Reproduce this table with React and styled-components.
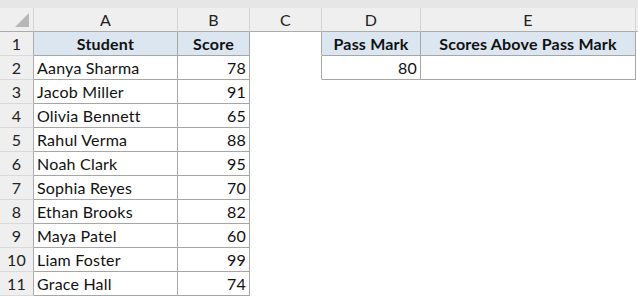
import React from 'react'
import styled, { createGlobalStyle } from 'styled-components'

const GlobalStyle = createGlobalStyle`
  html, body {
    margin: 0;
    padding: 0;
    background: #ffffff;
  }
  body {
    font-family: Lato, "Liberation Sans", sans-serif;
  }
`

const columns = [
  { key: 'A', width: 144 },
  { key: 'B', width: 72 },
  { key: 'C', width: 72 },
  { key: 'D', width: 99 },
  { key: 'E', width: 215 },
]

const students = [
  ['Aanya Sharma', 78],
  ['Jacob Miller', 91],
  ['Olivia Bennett', 65],
  ['Rahul Verma', 88],
  ['Noah Clark', 95],
  ['Sophia Reyes', 70],
  ['Ethan Brooks', 82],
  ['Maya Patel', 60],
  ['Liam Foster', 99],
  ['Grace Hall', 74],
]

const Sheet = styled.div`
  width: 638px;
  height: 297px;
  overflow: hidden;
  background: #ffffff;
`

const TopStrip = styled.div`
  height: 8px;
  background: #e6e6e6;
`

const Grid = styled.div`
  display: grid;
  grid-template-columns: 34px ${columns.map(c => `${c.width}px`).join(' ')} 1fr;
  grid-auto-rows: 24px;
`

const Corner = styled.div`
  position: relative;
  background: #efefef;
  border-right: 1px solid #d4d4d4;
  border-bottom: 1px solid #ababab;
  box-sizing: border-box;
  &::after {
    content: '';
    position: absolute;
    right: 4px;
    bottom: 4px;
    width: 0;
    height: 0;
    border-left: 14px solid transparent;
    border-bottom: 14px solid #b7b7b7;
  }
`

const ColHeader = styled.div`
  display: flex;
  align-items: center;
  justify-content: center;
  background: #efefef;
  border-right: 1px solid #d4d4d4;
  border-bottom: 1px solid #ababab;
  box-sizing: border-box;
  font-size: 16px;
  letter-spacing: 0.2px;
  color: #222;
`

const RowHeader = styled.div`
  display: flex;
  align-items: center;
  justify-content: center;
  background: #efefef;
  border-right: 1px solid #ababab;
  border-bottom: 1px solid #d9d9d9;
  box-sizing: border-box;
  font-size: 16px;
  letter-spacing: 0.2px;
  color: #222;
`

const Cell = styled.div`
  display: flex;
  align-items: center;
  justify-content: ${p => (p.$align === 'right' ? 'flex-end' : p.$align === 'center' ? 'center' : 'flex-start')};
  padding: 0 3px;
  box-sizing: border-box;
  background: ${p => (p.$head ? '#dce6f1' : '#ffffff')};
  border-right: 1px solid ${p => (p.$right ? '#a6a6a6' : 'transparent')};
  border-bottom: 1px solid ${p => (p.$bottom ? '#a6a6a6' : 'transparent')};
  font-size: 16px;
  letter-spacing: 0.2px;
  font-weight: ${p => (p.$head ? 700 : 400)};
  color: #111;
  white-space: nowrap;
  overflow: hidden;
`

const Filler = styled.div`
  background: #ffffff;
`

const HeadFiller = styled.div`
  background: #efefef;
  border-bottom: 1px solid #ababab;
`

function buildRow(r) {
  // cell definitions for A..E of sheet row r (1-based)
  const inTable = r <= 11
  const inSide = r <= 2
  const cells = {
    A: { text: '', $right: inTable, $bottom: inTable },
    B: { text: '', $right: inTable, $bottom: inTable, $align: 'right' },
    C: { text: '', $right: inSide },
    D: { text: '', $right: inSide, $bottom: inSide, $align: 'right' },
    E: { text: '', $right: inSide, $bottom: inSide },
  }
  if (r === 1) {
    cells.A = { ...cells.A, text: 'Student', $head: true, $align: 'center' }
    cells.B = { ...cells.B, text: 'Score', $head: true, $align: 'center' }
    cells.D = { ...cells.D, text: 'Pass Mark', $head: true, $align: 'center' }
    cells.E = { ...cells.E, text: 'Scores Above Pass Mark', $head: true, $align: 'center' }
  } else {
    const s = students[r - 2]
    if (s) {
      cells.A.text = s[0]
      cells.B.text = s[1]
    }
    if (r === 2) cells.D.text = 80
  }
  return cells
}

export default function App() {
  const rows = Array.from({ length: 11 }, (_, i) => i + 1)
  return (
    <Sheet>
      <GlobalStyle />
      <TopStrip />
      <Grid>
        <Corner />
        {columns.map(c => (
          <ColHeader key={c.key}>{c.key}</ColHeader>
        ))}
        <HeadFiller />
        {rows.map(r => {
          const cells = buildRow(r)
          return (
            <React.Fragment key={r}>
              <RowHeader>{r}</RowHeader>
              {columns.map(c => {
                const { text, ...props } = cells[c.key]
                return (
                  <Cell key={c.key} {...props}>
                    {text}
                  </Cell>
                )
              })}
              <Filler />
            </React.Fragment>
          )
        })}
      </Grid>
    </Sheet>
  )
}
